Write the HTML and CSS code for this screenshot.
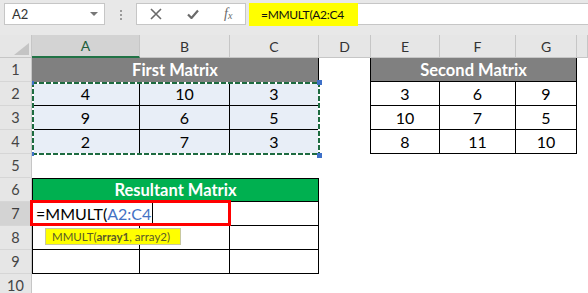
FILE: index.html
```html
<!doctype html>
<html>
<head>
<meta charset="utf-8">
<title>MMULT</title>
<link rel="stylesheet" href="styles.css">
</head>
<body>
<div class="bar">
    <div class="namebox"><span>A2</span><i class="drop"></i></div>
    <div class="grip"><i></i><i></i><i></i></div>
    <div class="fbtns">
        <svg width="12" height="12" viewBox="0 0 12 12"><path d="M1 1L11 11M11 1L1 11" stroke="#6a6a6a" stroke-width="1.6" fill="none"/></svg>
        <svg width="12" height="10" viewBox="0 0 12 10"><path d="M1 5.5L4.5 9L11 1.5" stroke="#6a6a6a" stroke-width="2.2" fill="none"/></svg>
        <span class="fx">f<sub>x</sub></span>
    </div>
    <div class="finput"><span class="fhl">=MMULT(A2:C4</span></div>
</div>

<div class="sheet">
    <div class="corner"><i></i></div>
    <div class="ch on">A</div>
    <div class="ch">B</div>
    <div class="ch">C</div>
    <div class="ch">D</div>
    <div class="ch">E</div>
    <div class="ch">F</div>
    <div class="ch">G</div>
    <div class="ch"></div>

    <!-- 1 -->
    <div class="rh">1</div>
    <div class="title grey br">First Matrix</div>
    <div class="cell br"></div>
    <div class="title grey br bb">Second Matrix</div>
    <div class="cell"></div>

    <!-- 2 -->
    <div class="rh">2</div>
    <div class="block">
        <div class="m">4</div><div class="m">10</div><div class="m">3</div>
        <div class="m">9</div><div class="m">6</div><div class="m">5</div>
        <div class="m">2</div><div class="m">7</div><div class="m">3</div>
        <i class="hd tl"></i><i class="hd tr"></i><i class="hd lb"></i><i class="hd rb"></i>
    </div>
    <div class="cell br"></div>
    <div class="cell br bb">3</div>
    <div class="cell br bb">6</div>
    <div class="cell br bb">9</div>
    <div class="cell"></div>

    <!-- 3 -->
    <div class="rh">3</div>
    <div class="cell br"></div>
    <div class="cell br bb">10</div>
    <div class="cell br bb">7</div>
    <div class="cell br bb">5</div>
    <div class="cell"></div>

    <!-- 4 -->
    <div class="rh">4</div>
    <div class="cell br"></div>
    <div class="cell br bb">8</div>
    <div class="cell br bb">11</div>
    <div class="cell br bb">10</div>
    <div class="cell"></div>

    <!-- 5 -->
    <div class="rh">5</div>
    <div class="rest"></div>

    <!-- 6 -->
    <div class="rh">6</div>
    <div class="title green">Resultant Matrix</div>
    <div class="fill5"></div>

    <!-- 7 -->
    <div class="rh on">7</div>
    <div class="edit">
        <span>=MMULT(</span><span class="ref">A2:C4</span><i class="caret"></i>
        <div class="tip">MMULT(<b>array1</b>, array2)</div>
    </div>
    <div class="cell br bb"></div>
    <div class="fill5"></div>

    <!-- 8 -->
    <div class="rh">8</div>
    <div class="cell br bb bl"></div>
    <div class="cell br bb"></div>
    <div class="cell br bb"></div>
    <div class="fill5"></div>

    <!-- 9 -->
    <div class="rh">9</div>
    <div class="cell br bb bl"></div>
    <div class="cell br bb"></div>
    <div class="cell br bb"></div>
    <div class="fill5"></div>

    <!-- 10 -->
    <div class="rh">10</div>
    <div class="rest"></div>
</div>
</body>
</html>
```

FILE: styles.css
```css
body{
	margin:0;
	background:#fff;
	font-family:Lato, 'Noto Sans', sans-serif;
	overflow:hidden;
}

/* formula bar */
.bar{
	display:flex;
	align-items:flex-start;
	height:35px;
	box-sizing:border-box;
	padding:3px 0 0 4px;
	background:#e8e8e8;
}
.namebox{
	display:flex;
	align-items:center;
	justify-content:space-between;
	width:101px;
	height:22px;
	box-sizing:border-box;
	padding:0 6px 0 7px;
	background:#fff;
	border:1px solid #c6c6c6;
	font-size:13px;
	color:#333;
}
.drop{
	width:0;
	height:0;
	border-left:4px solid transparent;
	border-right:4px solid transparent;
	border-top:4px solid #777;
}
.grip{
	display:flex;
	flex-direction:column;
	gap:2px;
	margin:7px 14px 0 15px;
}
.grip i{width:2px; height:2px; background:#9a9a9a;}
.fbtns{
	display:flex;
	align-items:center;
	justify-content:space-around;
	width:110px;
	height:22px;
	box-sizing:border-box;
	background:#fff;
	border:1px solid #c6c6c6;
}
.fx{
	font-family:'Liberation Serif', serif;
	font-style:italic;
	font-size:14px;
	color:#6a6a6a;
	line-height:1;
}
.fx sub{font-size:10px; vertical-align:-1px;}
.finput{
	flex:1;
	height:22px;
	margin-left:3px;
	background:#fff;
	border-top:1px solid #c6c6c6;
	border-bottom:1px solid #c6c6c6;
	box-sizing:border-box;
}
.fhl{
	display:block;
	width:109px;
	height:23px;
	margin-top:-1px;
	box-sizing:border-box;
	padding:4px 0 0 12px;
	background:#ffff00;
	font-size:12px;
	letter-spacing:-0.3px;
	color:#111;
}

/* sheet grid */
.sheet{
	display:grid;
	grid-template-columns:32px 108px 90px 89px 52px 69px 76px 61px 11px;
	grid-template-rows:23px repeat(10, 24px);
}
.sheet > div{box-sizing:border-box;}
.corner{
	position:relative;
	background:#e6e6e6;
	border-right:1px solid #c6c6c6;
	border-bottom:1px solid #c6c6c6;
}
.corner i{
	position:absolute;
	right:2px;
	bottom:2px;
	width:15px;
	height:12px;
	background:#c4c4c4;
	clip-path:polygon(100% 0, 100% 100%, 0 100%);
}
.ch{
	display:flex;
	align-items:center;
	justify-content:center;
	background:#e6e6e6;
	border-right:1px solid #c6c6c6;
	border-bottom:1px solid #c6c6c6;
	font-size:14px;
	color:#333;
}
.ch.on{
	background:#d3d3d3;
	border-bottom:2px solid #217346;
	color:#1e5e3c;
}
.rh{
	display:flex;
	align-items:center;
	justify-content:center;
	background:#e6e6e6;
	border-right:1px solid #c6c6c6;
	border-bottom:1px solid #d6d6d6;
	font-size:14.5px;
	color:#444;
}
.rh.on{background:#d3d3d3; color:#3d3d3d;}

.cell, .m{
	display:flex;
	align-items:center;
	justify-content:center;
	font-size:16px;
	color:#000;
}
.br{border-right:1px solid #000;}
.bb{border-bottom:1px solid #000;}
.bl{border-left:1px solid #000;}

.title{
	grid-column:span 3;
	display:flex;
	align-items:center;
	justify-content:center;
	font-size:16.5px;
	font-weight:bold;
	color:#fff;
}
.grey{background:#808080;}
.green{
	background:#00b050;
	border:1px solid #000;
}
.rest{grid-column:span 8;}
.fill5{grid-column:span 5;}

/* first matrix with copy frame */
.block{
	position:relative;
	grid-column:span 3;
	grid-row:span 3;
	display:grid;
	grid-template-columns:108px 90px 89px;
	grid-template-rows:repeat(3, 24px);
	background:#e8eef7;
}
.m{border-right:1px solid #000; border-bottom:1px solid #000;}
.block::after{
	content:'';
	position:absolute;
	left:0; top:0; right:-1px; bottom:-1px;
	background:
		repeating-linear-gradient(90deg, #1d6b40 0 5px, #fff 5px 7px) top / 100% 2px no-repeat,
		repeating-linear-gradient(90deg, #1d6b40 0 5px, #fff 5px 7px) bottom / 100% 2px no-repeat,
		repeating-linear-gradient(180deg, #1d6b40 0 5px, #fff 5px 7px) left / 2px 100% no-repeat,
		repeating-linear-gradient(180deg, #1d6b40 0 5px, #fff 5px 7px) right / 2px 100% no-repeat;
}
.hd{position:absolute; z-index:1; background:#3e70c8;}
.tl{left:0; top:-1px; width:2px; height:4px;}
.lb{left:0; bottom:-2px; width:2px; height:4px;}
.tr{right:-3px; top:-2px; width:5px; height:5px;}
.rb{right:-3px; bottom:-4px; width:5px; height:5px;}

/* cell being edited */
.edit{
	position:relative;
	z-index:2;
	grid-column:span 2;
	margin:-2px -1px 0 -2px;
	display:flex;
	align-items:center;
	padding-left:3px;
	background:#fff;
	border:3px solid #ff0000;
	font-size:16px;
	color:#000;
}
.ref{color:#4472c4;}
.caret{
	display:inline-block;
	width:1px;
	height:20px;
	margin-left:1px;
	background:#000;
}
.tip{
	position:absolute;
	left:12px;
	top:25px;
	width:136px;
	height:17px;
	box-sizing:border-box;
	padding-left:6px;
	background:#ffff00;
	border:1px solid #c8c8a0;
	font-size:11.5px;
	line-height:15px;
	color:#5a5a28;
	white-space:nowrap;
}
```
